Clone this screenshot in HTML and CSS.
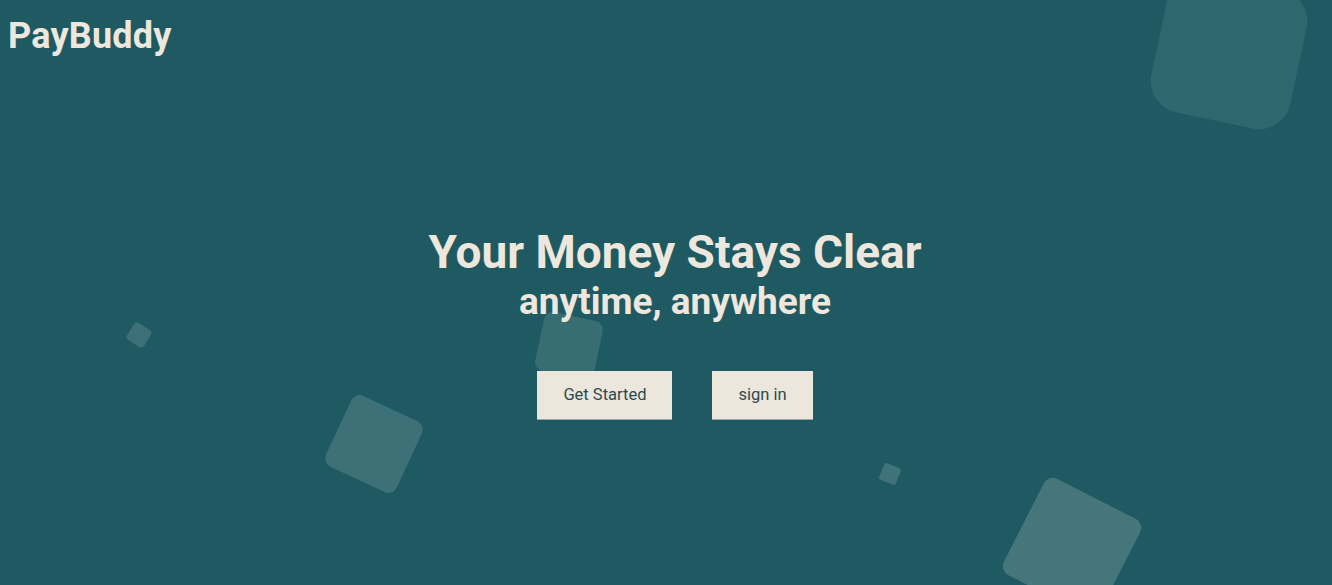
FILE: index.html
```html
<!DOCTYPE html>
<html lang="en">
<head>
<meta charset="utf-8">
<title>PayBuddy</title>
<link rel="stylesheet" href="styles.css">
</head>
<body>
<div class="page">
  <div class="shapes" aria-hidden="true">
    <span class="sq sq-1"></span>
    <span class="sq sq-2"></span>
    <span class="sq sq-3"></span>
    <span class="sq sq-4"></span>
    <span class="sq sq-5"></span>
    <span class="sq sq-6"></span>
  </div>
  <header class="header">
    <div class="logo">PayBuddy</div>
  </header>
  <main class="hero">
    <h1 class="title">Your Money Stays Clear</h1>
    <h2 class="subtitle">anytime, anywhere</h2>
    <div class="actions">
      <a class="btn" href="#">Get Started</a>
      <a class="btn" href="#">sign in</a>
    </div>
  </main>
</div>
</body>
</html>
```

FILE: styles.css
```css
* { box-sizing: border-box; }
html, body { margin: 0; padding: 0; }
body {
  background: #1f5a62;
  font-family: Roboto, "Noto Sans", sans-serif;
  color: #eee7dd;
}
.page {
  position: relative;
  height: 585px;
  overflow: hidden;
}
.shapes { position: absolute; inset: 0; pointer-events: none; }
.sq { position: absolute; display: block; }
.sq-1 { left: 1158px; top: -20px; width: 142px; height: 142px; border-radius: 32px; transform: rotate(12deg); background: #2d686e; }
.sq-2 { left: 129px; top: 325px; width: 20px; height: 20px; border-radius: 4px; transform: rotate(32deg); background: #3d7177; }
.sq-3 { left: 539px; top: 316px; width: 60px; height: 60px; border-radius: 9px; transform: rotate(12deg); background: #386d73; }
.sq-4 { left: 335px; top: 405px; width: 78px; height: 78px; border-radius: 9px; transform: rotate(25deg); background: #3d7177; }
.sq-5 { left: 881px; top: 465px; width: 18px; height: 18px; border-radius: 3px; transform: rotate(22deg); background: #3f7379; }
.sq-6 { left: 1018px; top: 493px; width: 108px; height: 108px; border-radius: 10px; transform: rotate(27deg); background: #45767c; }

.header { position: relative; padding: 12px 8px; }
.logo {
  font-size: 36px;
  font-weight: 700;
  line-height: 48px;
  letter-spacing: 0.2px;
  color: #eee7dd;
}
.hero {
  position: relative;
  display: flex;
  flex-direction: column;
  align-items: center;
  padding-top: 152px;
  padding-left: 18px;
}
.title {
  margin: 0;
  font-size: 46px;
  font-weight: 700;
  line-height: 56px;
}
.subtitle {
  margin: 0;
  font-size: 37px;
  font-weight: 700;
  line-height: 44px;
}
.actions {
  display: flex;
  gap: 40px;
  margin-top: 47px;
}
.btn {
  display: block;
  background: #ede6dc;
  color: #2b4a4f;
  text-decoration: none;
  font-size: 16.5px;
  line-height: 20px;
  padding: 14px 26px;
  border-bottom: 1px solid #9aa6a6;
}
```
